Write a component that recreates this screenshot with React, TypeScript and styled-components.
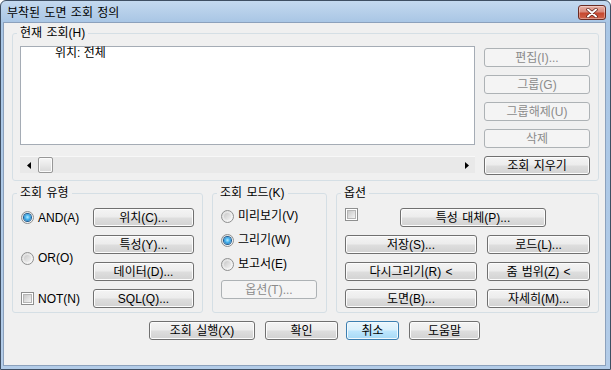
import React from "react";
import styled, { createGlobalStyle, css } from "styled-components";

const Global = createGlobalStyle`
  html, body { margin: 0; padding: 0; background: #ffffff; }
  body {
    font-family: "Liberation Sans", "Noto Sans CJK KR", sans-serif;
    font-size: 12px;
    color: #000;
  }
  * { box-sizing: border-box; }
`;

const Window = styled.div`
  width: 611px;
  height: 370px;
  display: flex;
  flex-direction: column;
  border: 1px solid #3f4f63;
  border-radius: 6px 6px 0 0;
  background: linear-gradient(to bottom, #c4d9ef 0px, #a9c6e5 21px, #b3cce8 100%);
  padding: 0 4px 3px 2px;
  overflow: hidden;
`;

const TitleBar = styled.div`
  height: 21px;
  flex: none;
  display: flex;
  justify-content: space-between;
  align-items: flex-start;
`;

const TitleText = styled.div`
  margin: 5px 0 0 4px;
  line-height: 14px;
  font-size: 12px;
  word-spacing: 1px;
`;

const CloseButton = styled.div`
  width: 28px;
  height: 15px;
  margin-top: 4px;
  border: 1px solid #6b2b23;
  border-radius: 3px;
  background: linear-gradient(to bottom, #e8b1a7 0%, #d98a7c 45%, #c6472f 55%, #d0644c 100%);
  box-shadow: inset 0 0 0 1px rgba(255, 255, 255, 0.35);
  display: flex;
  align-items: center;
  justify-content: center;
`;

const Client = styled.div`
  flex: 1;
  display: flex;
  flex-direction: column;
  border: 1px solid #8ca1bc;
  background: #f0f0f0;
  padding: 4px 6px 0 8px;
`;

const Group = styled.fieldset<{ $w?: number }>`
  margin: 0;
  padding: 0;
  min-width: 0;
  border: 1px solid #d5dfe5;
  border-radius: 3px;
  ${(p) => (p.$w ? css`width: ${p.$w}px; flex: none;` : "")}
`;

const Legend = styled.legend`
  margin-left: 4px;
  padding: 0 3px;
  font-size: 12px;
  line-height: 12px;
  word-spacing: 1px;
`;

const TopContent = styled.div`
  display: flex;
  gap: 9px;
  padding: 7px 8px 5px 7px;
`;

const ListColumn = styled.div`
  width: 455px;
  display: flex;
  flex-direction: column;
`;

const ListBox = styled.div`
  height: 99px;
  background: #ffffff;
  border: 1px solid #a5acb5;
  padding: 0 0 0 34px;
  line-height: 12px;
`;

const HScroll = styled.div`
  margin-top: 11px;
  height: 17px;
  display: flex;
  align-items: stretch;
  background: #e9e9e9;
  border-top: 1px solid #f8f8f8;
`;

const ScrollArrow = styled.div`
  width: 17px;
  flex: none;
  display: flex;
  align-items: center;
  justify-content: center;
`;

const ScrollThumb = styled.div`
  width: 15px;
  margin-left: 1px;
  border: 1px solid #979797;
  border-radius: 2px;
  background: linear-gradient(to bottom, #f6f6f6 0%, #e8e8e8 50%, #d8d8d8 100%);
  box-shadow: inset 0 0 0 1px #fbfbfb;
`;

const ScrollSpacer = styled.div`
  flex: 1;
`;

const ButtonColumn = styled.div`
  width: 106px;
  margin-top: 2px;
  display: flex;
  flex-direction: column;
  gap: 8px;
`;

const Button = styled.div<{ $disabled?: boolean; $default?: boolean; $w?: number }>`
  height: 19px;
  ${(p) => (p.$w ? css`width: ${p.$w}px;` : "")}
  flex: none;
  display: flex;
  align-items: center;
  justify-content: center;
  border: 1px solid #707070;
  border-radius: 3px;
  background: linear-gradient(to bottom, #f4f4f4 0%, #ececec 48%, #dedede 52%, #d2d2d2 100%);
  box-shadow: inset 0 0 0 1px #fcfcfc;
  font-size: 12px;
  line-height: 14px;
  word-spacing: 1px;
  white-space: nowrap;
  color: #000;
  ${(p) =>
    p.$disabled &&
    css`
      border-color: #adb2b5;
      background: #f4f4f4;
      box-shadow: none;
      color: #8b8b8b;
    `}
  ${(p) =>
    p.$default &&
    css`
      border-color: #3c7fb1;
      background: linear-gradient(to bottom, #eaf6fd 0%, #d9f0fc 48%, #bee6fd 52%, #a7d9f5 100%);
      box-shadow: inset 0 0 0 1px #f2f9fd;
    `}
`;

const LowerRow = styled.div`
  display: flex;
  gap: 9px;
  margin-top: 6px;
`;

const TypeGrid = styled.div`
  display: grid;
  grid-template-columns: 72px 101px;
  grid-template-rows: repeat(4, 19px);
  row-gap: 8px;
  padding: 9px 8px 4px 8px;
`;

const OptionRow = styled.label<{ $row?: string }>`
  display: flex;
  align-items: center;
  gap: 4px;
  line-height: 14px;
  white-space: nowrap;
  ${(p) => (p.$row ? css`grid-row: ${p.$row}; grid-column: 1;` : "")}
`;

const ModeColumn = styled.div`
  display: flex;
  flex-direction: column;
  gap: 8px;
  padding: 9px 9px 13px 8px;
`;

const ModeItem = styled.label`
  height: 16px;
  display: flex;
  align-items: center;
  gap: 4px;
  line-height: 14px;
  white-space: nowrap;
`;

const OptGrid = styled.div`
  display: grid;
  grid-template-columns: 132px 103px;
  grid-template-rows: repeat(4, 19px);
  row-gap: 8px;
  column-gap: 10px;
  padding: 9px 8px 4px 8px;
`;

const OptFirstRow = styled.div`
  grid-column: 1 / span 2;
  display: flex;
  align-items: flex-start;
  gap: 42px;
`;

const RadioCircle = styled.span<{ $on?: boolean }>`
  width: 13px;
  height: 13px;
  flex: none;
  border-radius: 50%;
  border: 1px solid #8e8f8f;
  background: linear-gradient(135deg, #dcdcdc 0%, #fbfbfb 100%);
  display: inline-flex;
  align-items: center;
  justify-content: center;
  &::after {
    content: "";
    width: 7px;
    height: 7px;
    border-radius: 50%;
    ${(p) =>
      p.$on
        ? css`
            background: radial-gradient(circle at 50% 45%, #b6ecff 0%, #45b2ee 45%, #0d5a9e 100%);
            box-shadow: 0 0 0 1px #1e5c91;
          `
        : css`
            background: linear-gradient(135deg, #c9c9c9 0%, #f2f2f2 100%);
          `}
  }
`;

const CheckBox = styled.span<{ $mt?: number }>`
  width: 13px;
  height: 13px;
  flex: none;
  border: 1px solid #8e8f8f;
  background: #ffffff;
  padding: 1px;
  margin-top: ${(p) => p.$mt ?? 0}px;
  display: inline-flex;
  &::after {
    content: "";
    flex: 1;
    border: 1px solid #b5b5b5;
    background: linear-gradient(135deg, #c8c8c8 0%, #f3f3f3 100%);
  }
`;

const BottomRow = styled.div`
  display: flex;
  margin-top: 8px;
  padding-left: 137px;
`;

const BottomGap = styled.div<{ $w: number }>`
  width: ${(p) => p.$w}px;
  flex: none;
`;

export default function App() {
  return (
    <>
      <Global />
      <Window>
        <TitleBar>
          <TitleText>부착된 도면 조회 정의</TitleText>
          <CloseButton>
            <svg width="12" height="10" viewBox="0 0 12 10">
              <path d="M2 1.5 L10 8.5 M10 1.5 L2 8.5" stroke="#5c1d15" strokeWidth="3.4" strokeLinecap="round" />
              <path d="M2 1.5 L10 8.5 M10 1.5 L2 8.5" stroke="#ffffff" strokeWidth="2" strokeLinecap="round" />
            </svg>
          </CloseButton>
        </TitleBar>
        <Client>
          <Group>
            <Legend>현재 조회(H)</Legend>
            <TopContent>
              <ListColumn>
                <ListBox>위치: 전체</ListBox>
                <HScroll>
                  <ScrollArrow>
                    <svg width="4" height="7" viewBox="0 0 4 7">
                      <path d="M4 0 L0 3.5 L4 7 Z" fill="#000" />
                    </svg>
                  </ScrollArrow>
                  <ScrollThumb />
                  <ScrollSpacer />
                  <ScrollArrow>
                    <svg width="4" height="7" viewBox="0 0 4 7">
                      <path d="M0 0 L4 3.5 L0 7 Z" fill="#000" />
                    </svg>
                  </ScrollArrow>
                </HScroll>
              </ListColumn>
              <ButtonColumn>
                <Button $disabled>편집(I)...</Button>
                <Button $disabled>그룹(G)</Button>
                <Button $disabled>그룹해제(U)</Button>
                <Button $disabled>삭제</Button>
                <Button>조회 지우기</Button>
              </ButtonColumn>
            </TopContent>
          </Group>

          <LowerRow>
            <Group $w={191}>
              <Legend>조회 유형</Legend>
              <TypeGrid>
                <OptionRow $row="1">
                  <RadioCircle $on />
                  AND(A)
                </OptionRow>
                <OptionRow $row="2 / span 2">
                  <RadioCircle />
                  OR(O)
                </OptionRow>
                <OptionRow $row="4">
                  <CheckBox />
                  NOT(N)
                </OptionRow>
                <Button style={{ gridColumn: 2, gridRow: 1 }}>위치(C)...</Button>
                <Button style={{ gridColumn: 2, gridRow: 2 }}>특성(Y)...</Button>
                <Button style={{ gridColumn: 2, gridRow: 3 }}>데이터(D)...</Button>
                <Button style={{ gridColumn: 2, gridRow: 4 }}>SQL(Q)...</Button>
              </TypeGrid>
            </Group>

            <Group $w={115}>
              <Legend>조회 모드(K)</Legend>
              <ModeColumn>
                <ModeItem>
                  <RadioCircle />
                  미리보기(V)
                </ModeItem>
                <ModeItem>
                  <RadioCircle $on />
                  그리기(W)
                </ModeItem>
                <ModeItem>
                  <RadioCircle />
                  보고서(E)
                </ModeItem>
                <Button $disabled>옵션(T)...</Button>
              </ModeColumn>
            </Group>

            <Group $w={263}>
              <Legend>옵션</Legend>
              <OptGrid>
                <OptFirstRow>
                  <CheckBox $mt={0} />
                  <Button $w={146}>특성 대체(P)...</Button>
                </OptFirstRow>
                <Button>저장(S)...</Button>
                <Button>로드(L)...</Button>
                <Button>다시그리기(R) &lt;</Button>
                <Button>줌 범위(Z) &lt;</Button>
                <Button>도면(B)...</Button>
                <Button>자세히(M)...</Button>
              </OptGrid>
            </Group>
          </LowerRow>

          <BottomRow>
            <Button $w={106}>조회 실행(X)</Button>
            <BottomGap $w={10} />
            <Button $w={73}>확인</Button>
            <BottomGap $w={8} />
            <Button $w={53} $default>취소</Button>
            <BottomGap $w={10} />
            <Button $w={71}>도움말</Button>
          </BottomRow>
        </Client>
      </Window>
    </>
  );
}
